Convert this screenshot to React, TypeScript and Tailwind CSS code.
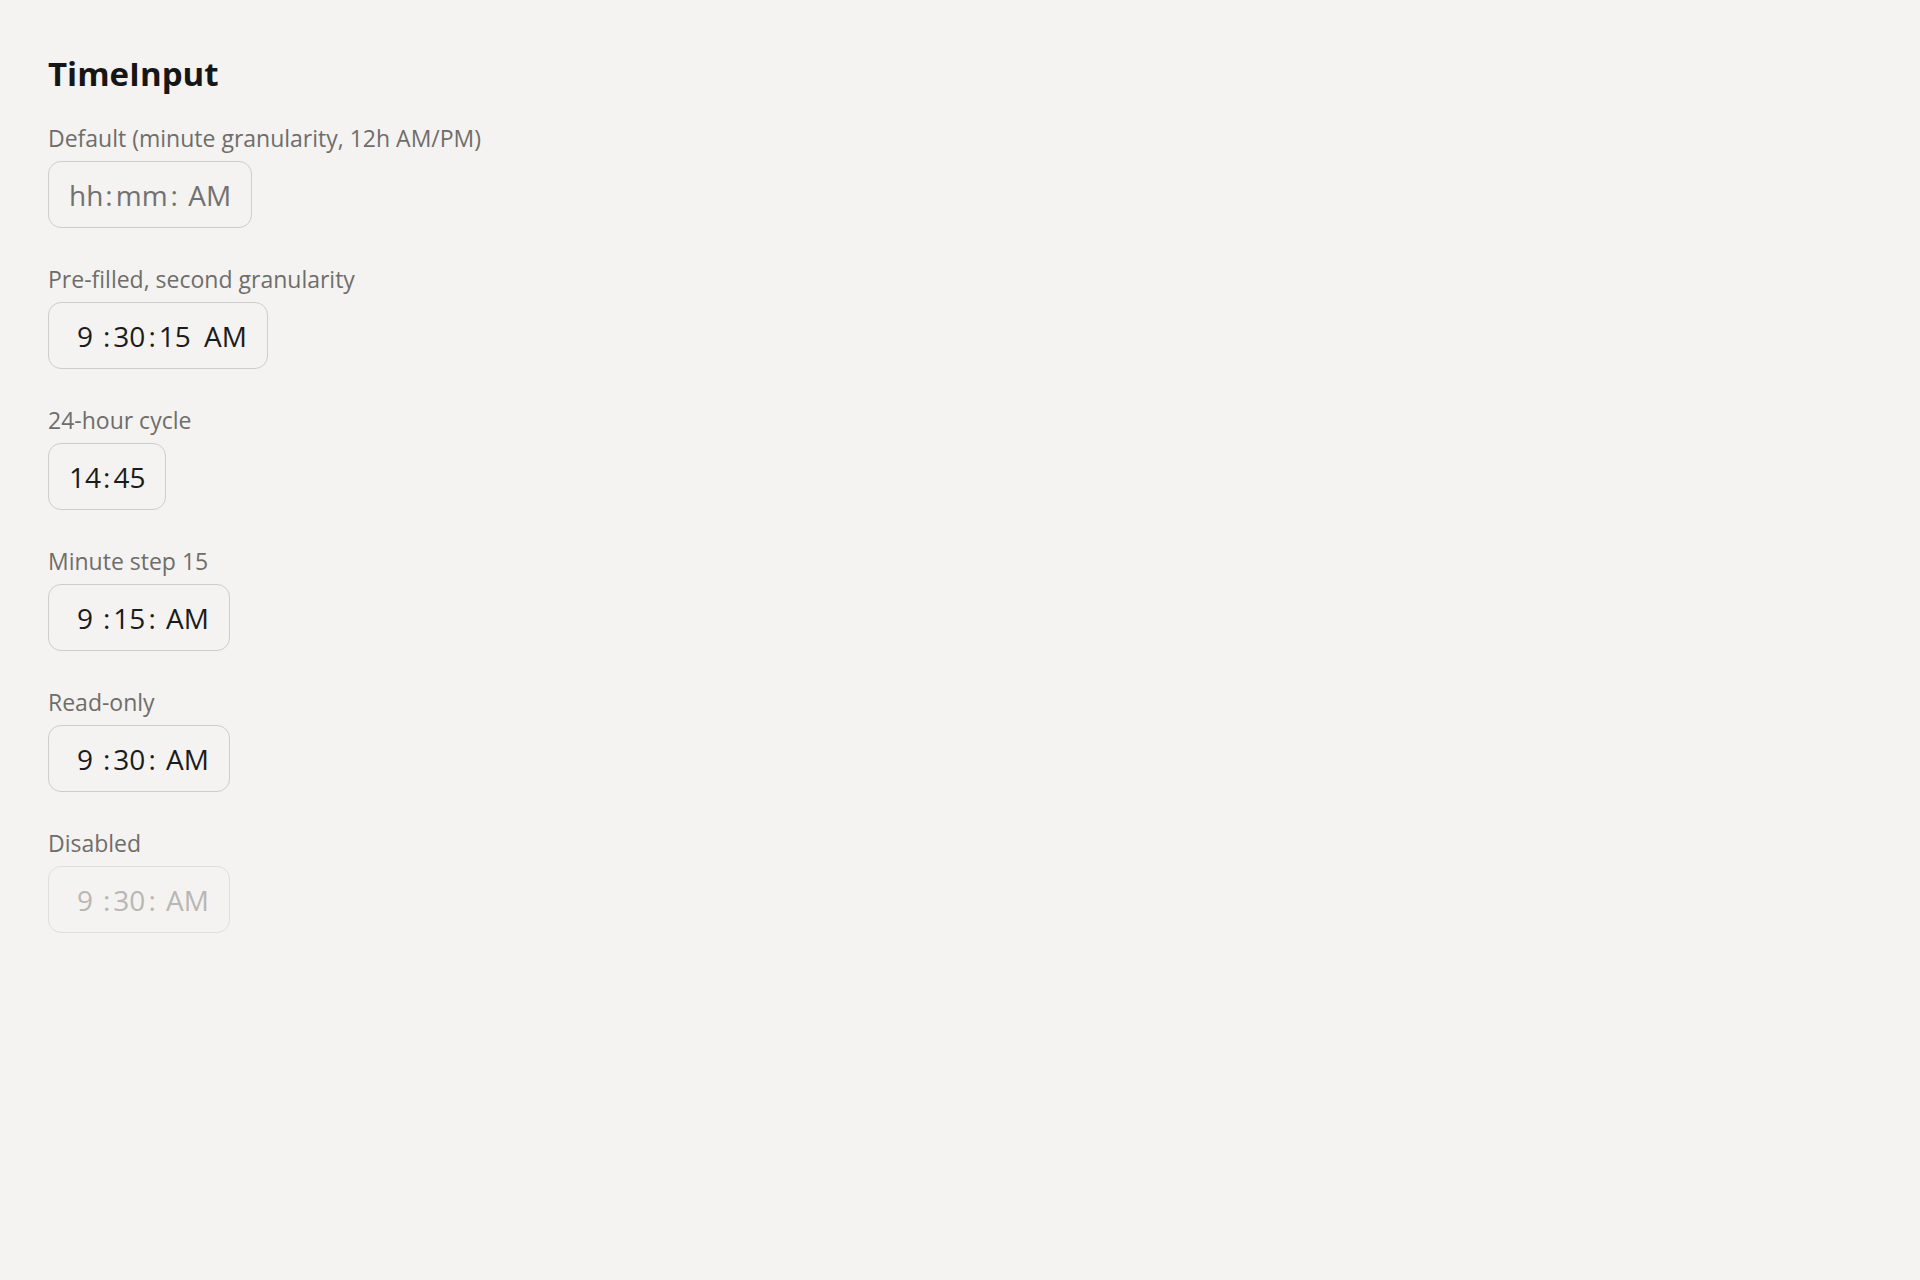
import type { ReactNode } from 'react'

type Segment = {
  text: string
  kind: 'hour' | 'minute' | 'second' | 'period' | 'literal'
}

interface TimeFieldProps {
  label: string
  segments: Segment[]
  placeholder?: boolean
  disabled?: boolean
}

const hh = (text: string): Segment => ({ text, kind: 'hour' })
const mm = (text: string): Segment => ({ text, kind: 'minute' })
const ss = (text: string): Segment => ({ text, kind: 'second' })
const ap = (text: string): Segment => ({ text, kind: 'period' })
const lit = (text: string): Segment => ({ text, kind: 'literal' })

function SegmentSpan({ seg }: { seg: Segment }) {
  if (seg.kind === 'literal') {
    return <span className="whitespace-pre px-[1px]">{seg.text}</span>
  }
  if (seg.kind === 'hour') {
    return <span className="inline-block min-w-[34px] px-[1px] text-center">{seg.text}</span>
  }
  return <span className="inline-block px-[2px]">{seg.text}</span>
}

function Field({ label, children }: { label: string; children: ReactNode }) {
  return (
    <div className="flex flex-col gap-[7px]">
      <span className="text-[23px] leading-[32px] text-[#6f6d6b]">{label}</span>
      {children}
    </div>
  )
}

function TimeField({ label, segments, placeholder, disabled }: TimeFieldProps) {
  const tone = disabled
    ? 'border-[#e0dedb] text-[#b9b7b4]'
    : placeholder
      ? 'border-[#cfcdca] text-[#727170]'
      : 'border-[#cfcdca] text-[#1b1b1b]'

  return (
    <Field label={label}>
      <div
        className={`inline-flex h-[67px] w-fit items-center rounded-[13px] border-[1.5px] pl-[19px] pr-[18px] text-[28px] leading-none ${tone}`}
      >
        {segments.map((seg, i) => (
          <SegmentSpan key={i} seg={seg} />
        ))}
      </div>
    </Field>
  )
}

export default function App() {
  return (
    <div
      className="min-h-[1280px] bg-[#f4f3f1] px-[48px] pt-[54px]"
      style={{ fontFamily: '"Open Sans", "Noto Sans", sans-serif' }}
    >
      <h1 className="text-[33px] font-bold leading-[40px] text-[#161616]">TimeInput</h1>
      <div className="mt-[28px] flex flex-col gap-[35px]">
        <TimeField
          label="Default (minute granularity, 12h AM/PM)"
          placeholder
          segments={[hh('hh'), lit(':'), mm('mm'), lit(': '), ap('AM')]}
        />
        <TimeField
          label="Pre-filled, second granularity"
          segments={[hh('9'), lit(':'), mm('30'), lit(':'), ss('15'), lit(' '), ap('AM')]}
        />
        <TimeField label="24-hour cycle" segments={[hh('14'), lit(':'), mm('45')]} />
        <TimeField
          label="Minute step 15"
          segments={[hh('9'), lit(':'), mm('15'), lit(': '), ap('AM')]}
        />
        <TimeField
          label="Read-only"
          segments={[hh('9'), lit(':'), mm('30'), lit(': '), ap('AM')]}
        />
        <TimeField
          label="Disabled"
          disabled
          segments={[hh('9'), lit(':'), mm('30'), lit(': '), ap('AM')]}
        />
      </div>
    </div>
  )
}
